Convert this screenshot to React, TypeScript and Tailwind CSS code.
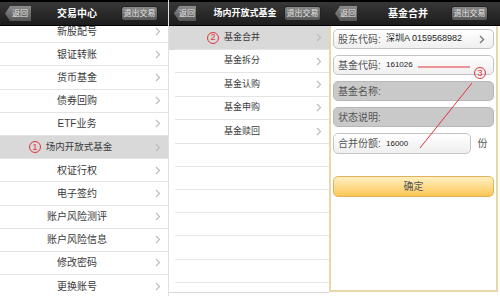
import type { ReactNode } from 'react'

const font = "font-['Liberation_Sans','Noto_Sans_CJK_SC',sans-serif]"

function Chevron() {
  return (
    <svg width="6" height="9" viewBox="0 0 6 9" className="shrink-0">
      <path d="M1 1 L4.5 4.5 L1 8" fill="none" stroke="#bdbdbd" strokeWidth="1.2" />
    </svg>
  )
}

function Circled({ n }: { n: string }) {
  return (
    <span className="flex h-[12px] w-[12px] items-center justify-center rounded-full border border-[#e0343c] text-[9px] leading-none text-[#e0343c]">
      {n}
    </span>
  )
}

function BackButton({ w }: { w: string }) {
  return (
    <div
      className={`${w} flex h-[15px] items-center justify-center bg-gradient-to-b from-[#8c8c8c] to-[#555] pl-[4px] text-[8px] leading-none text-[#e6e6e6] [clip-path:polygon(5px_0,100%_0,100%_100%,5px_100%,0_50%)]`}
    >
      返回
    </div>
  )
}

function ExitButton() {
  return (
    <div className="flex h-[15px] w-[37px] items-center justify-center rounded-[3px] border border-[#222] bg-gradient-to-b from-[#8a8a8a] to-[#565656] text-[8px] leading-none text-[#e6e6e6]">
      退出交易
    </div>
  )
}

function Header({ title, backW, titleClass, pl, pr }: { title: string; backW: string; titleClass: string; pl: string; pr: string }) {
  return (
    <div className={`flex h-[26px] shrink-0 items-center border-t-2 border-b border-t-black border-b-black bg-gradient-to-b from-[#383838] to-[#1c1c1c] ${pl} ${pr}`}>
      <BackButton w={backW} />
      <div className={`flex-1 text-center font-bold text-white ${titleClass}`}>{title}</div>
      <ExitButton />
    </div>
  )
}

function MenuRow({ label, active, mark, markLeft, textClass, h }: { label: string; active?: boolean; mark?: ReactNode; markLeft?: string; textClass: string; h: string }) {
  return (
    <div className={`relative flex ${h} shrink-0 items-center border-b border-[#e4e4e4] ${active ? 'bg-[#d9d9d9]' : ''}`}>
      {mark ? <div className={`absolute top-1/2 -translate-y-1/2 ${markLeft}`}>{mark}</div> : null}
      <div className={`flex-1 text-center text-[#3a3a3a] ${textClass}`}>{label}</div>
      <div className="flex w-[20px] justify-center">
        <Chevron />
      </div>
    </div>
  )
}

const tradeMenu = ['新股配号', '银证转账', '货币基金', '债券回购', 'ETF业务', '场内开放式基金', '权证行权', '电子签约', '账户风险测评', '账户风险信息', '修改密码', '更换账号']
const fundMenu = ['基金合并', '基金拆分', '基金认购', '基金申购', '基金赎回', '', '', '', '', '', '']

function Field({ label, value, gray, valueClass, chevron, h = 'h-[20px]' }: { label: string; value?: string; gray?: boolean; valueClass?: string; chevron?: boolean; h?: string }) {
  return (
    <div
      className={`flex ${h} items-center rounded-[5px] border pl-[4px] pr-[8px] ${
        gray ? 'border-[#b8b8b8] bg-[#c9c9c9]' : 'border-[#c4c4c4] bg-gradient-to-b from-white to-[#efefef]'
      }`}
    >
      <div className="w-[48px] shrink-0 text-[10px] text-[#555]">{label}</div>
      <div className={`flex-1 text-[#222] ${valueClass ?? ''}`}>{value}</div>
      {chevron ? (
        <svg width="6" height="9" viewBox="0 0 6 9">
          <path d="M1 1 L4.5 4.5 L1 8" fill="none" stroke="#777" strokeWidth="1.4" />
        </svg>
      ) : null}
    </div>
  )
}

export default function App() {
  return (
    <div className={`flex h-[296px] w-[500px] overflow-hidden bg-white ${font}`}>
      {/* 交易中心 */}
      <div className="flex w-[169px] shrink-0 flex-col border-r border-[#e0e0e0]">
        <Header title="交易中心" backW="w-[26px]" titleClass="text-[10px] pl-[2px]" pl="pl-[5px]" pr="pr-[10px]" />
        <div className="flex-1 overflow-hidden">
          <div className="-mt-[6px] flex flex-col">
            {tradeMenu.map((m) => (
              <MenuRow
                key={m}
                label={m}
                h="h-[23.2px]"
                active={m === '场内开放式基金'}
                mark={m === '场内开放式基金' ? <Circled n="1" /> : undefined}
                markLeft="left-[29px]"
                textClass={m === '场内开放式基金' ? 'text-[9.5px] pl-[10px]' : 'text-[10px] pl-[6px]'}
              />
            ))}
          </div>
        </div>
      </div>

      {/* 场内开放式基金 */}
      <div className="flex w-[160px] shrink-0 flex-col">
        <Header title="场内开放式基金" backW="w-[22px]" titleClass="text-[9px] pl-[10px]" pl="pl-[5px]" pr="pr-[8px]" />
        <div className="flex h-[267px] flex-col border-b border-[#d8d8d8]">
          {fundMenu.map((m, i) => (
            <div key={i} className={i === 0 ? 'bg-[#d9d9d9]' : ''}>
              <div className="ml-[6px]">
                {m ? (
                  <MenuRow
                    label={m}
                    h={i === 0 ? 'h-[24px]' : 'h-[23.4px]'}
                    mark={i === 0 ? <Circled n="2" /> : undefined}
                    markLeft="left-[32px]"
                    textClass="text-[9px]"
                  />
                ) : (
                  <div className="h-[23.2px] border-b border-[#e8e8e8]" />
                )}
              </div>
            </div>
          ))}
        </div>
      </div>

      {/* 基金合并 */}
      <div className="relative flex w-[171px] shrink-0 flex-col">
        <Header title="基金合并" backW="w-[22px]" titleClass="text-[10px] pl-[8px]" pl="pl-[6px]" pr="pr-[12px]" />
        <div className="mr-[2px] flex h-[266px] flex-col gap-[6px] border-x-2 border-b-2 border-[#ead6ab] px-[2px] pt-[3px]">
          <Field label="股东代码:" value="深圳A 0159568982" valueClass="text-[9px]" chevron />
          <Field label="基金代码:" value="161026" valueClass="text-[8px]" />
          <Field label="基金名称:" gray />
          <Field label="状态说明:" gray />
          <div className="flex items-center">
            <div className="w-[138px]">
              <Field label="合并份额:" value="16000" valueClass="text-[8px]" h="h-[21px]" />
            </div>
            <div className="flex-1 text-center text-[10px] text-[#555]">份</div>
          </div>
          <div className="mt-[16px] flex h-[21px] items-center justify-center rounded-[5px] border border-[#e2b35c] bg-gradient-to-b from-[#fef0c0] to-[#fcc650] text-[10px] text-[#555]">
            确定
          </div>
        </div>
        <svg className="pointer-events-none absolute inset-0" width="171" height="296" viewBox="0 0 171 296">
          <line x1="89" y1="67" x2="141" y2="67" stroke="#e0343c" strokeWidth="1" />
          <line x1="143" y1="83" x2="91" y2="148" stroke="#e0343c" strokeWidth="1" />
        </svg>
        <div className="pointer-events-none absolute left-[145px] top-[67px]">
          <Circled n="3" />
        </div>
      </div>
    </div>
  )
}
